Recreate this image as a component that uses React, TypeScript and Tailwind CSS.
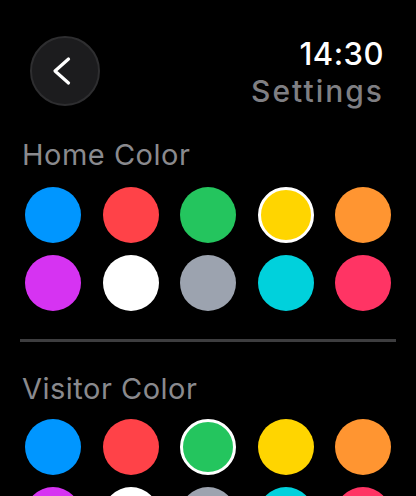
import { useState } from 'react'

const COLORS = [
  '#0096ff',
  '#ff4248',
  '#24c55e',
  '#ffd500',
  '#ff9531',
  '#d633f2',
  '#ffffff',
  '#9ca3af',
  '#00d1dc',
  '#ff3464',
]

const Swatch = ({ color, selected, onClick }: { color: string; selected: boolean; onClick: () => void }) => (
  <button
    type="button"
    onClick={onClick}
    className={`h-14 w-14 shrink-0 rounded-full ${selected ? 'border-[3px] border-white' : ''}`}
    style={{ backgroundColor: color }}
    aria-label={color}
  />
)

const ColorSection = ({
  title,
  value,
  onChange,
  tight = false,
}: {
  title: string
  value: number
  onChange: (index: number) => void
  tight?: boolean
}) => (
  <section className="px-5">
    <h2 className="px-[2px] text-[29px] leading-[36px] tracking-[0.5px] text-[#8a8a8e]">{title}</h2>
    <div className={`${tight ? 'mt-[12px]' : 'mt-[14px]'} flex flex-col gap-3 px-[5px]`}>
      {[COLORS.slice(0, 5), COLORS.slice(5)].map((row, rowIndex) => (
        <div key={rowIndex} className="flex justify-between">
          {row.map((color, i) => {
            const index = rowIndex * 5 + i
            return <Swatch key={color} color={color} selected={index === value} onClick={() => onChange(index)} />
          })}
        </div>
      ))}
    </div>
  </section>
)

export default function App() {
  const [home, setHome] = useState(3)
  const [visitor, setVisitor] = useState(2)

  return (
    <div
      className="h-[496px] w-[416px] overflow-hidden bg-black text-white"
      style={{ fontFamily: 'Inter, "Noto Sans", sans-serif' }}
    >
      <header className="flex items-start justify-between pl-[30px] pr-[32px] pt-[36px]">
        <button
          type="button"
          className="flex h-[70px] w-[70px] items-center justify-center rounded-full border-2 border-[#2e2e30] bg-[#1c1c1e]"
          aria-label="Back"
        >
          <svg width="20" height="30" viewBox="0 0 20 30" fill="none" className="-ml-[6px]">
            <path d="M16.5 3 L3 15 L16.5 27" stroke="white" strokeWidth="3.2" strokeLinecap="round" strokeLinejoin="round" />
          </svg>
        </button>
        <div className="flex flex-col items-end">
          <span className="text-[31px] font-medium leading-[36px] tracking-[0.5px]">14:30</span>
          <span className="mt-[1px] text-[30px] font-medium leading-[36px] tracking-[2px] text-[#7f7f83]">
            Settings
          </span>
        </div>
      </header>

      <main className="mt-[28px]">
        <ColorSection title="Home Color" value={home} onChange={setHome} />
        <div className="mx-5 mt-[28px] h-[3px] bg-[#3d3d3f]" />
        <div className="mt-[29px]">
          <ColorSection title="Visitor Color" value={visitor} onChange={setVisitor} tight />
        </div>
      </main>
    </div>
  )
}
